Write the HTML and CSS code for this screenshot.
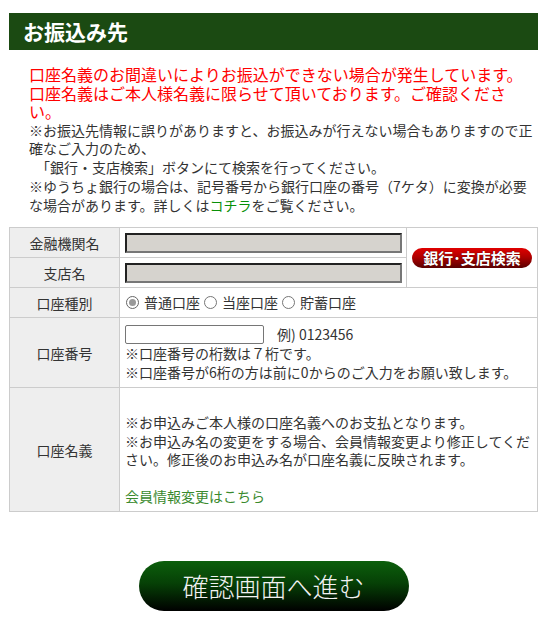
FILE: index.html
```html
<!DOCTYPE html>
<html lang="ja">
<head>
<meta charset="utf-8">
<title>お振込み先</title>
<link rel="stylesheet" href="styles.css">
</head>
<body>
<div class="page">
  <h2 class="head">お振込み先</h2>
  <div class="notes">
    <p class="warn">口座名義のお間違いによりお振込ができない場合が発生しています。口座名義はご本人様名義に限らせて頂いております。ご確認ください。</p>
    <p class="info">※お振込先情報に誤りがありますと、お振込みが行えない場合もありますので正確なご入力のため、<br>　「銀行・支店検索」ボタンにて検索を行ってください。<br>※ゆうちょ銀行の場合は、記号番号から銀行口座の番号（7ケタ）に変換が必要な場合があります。詳しくは<a class="g" href="#">コチラ</a>をご覧ください。</p>
  </div>
  <table class="form">
    <tr class="r1">
      <th>金融機関名</th>
      <td class="val"><span class="ro"></span></td>
      <td class="btncell" rowspan="2"><span class="search">銀行･支店検索</span></td>
    </tr>
    <tr class="r2">
      <th>支店名</th>
      <td class="val"><span class="ro"></span></td>
    </tr>
    <tr class="r3">
      <th>口座種別</th>
      <td class="val" colspan="2"><label class="rad"><span class="radio on"></span>普通口座</label><label class="rad"><span class="radio"></span>当座口座</label><label class="rad"><span class="radio"></span>貯蓄口座</label></td>
    </tr>
    <tr class="r4">
      <th>口座番号</th>
      <td class="val acc" colspan="2"><span class="num"></span><span class="ex">例) 0123456</span><br>※口座番号の桁数は７桁です。<br>※口座番号が6桁の方は前に0からのご入力をお願い致します。</td>
    </tr>
    <tr class="r5">
      <th>口座名義</th>
      <td class="val name" colspan="2">※お申込みご本人様の口座名義へのお支払となります。<br>※お申込み名の変更をする場合、会員情報変更より修正してください。修正後のお申込み名が口座名義に反映されます。<br><br><a class="g2" href="#">会員情報変更はこちら</a></td>
    </tr>
  </table>
  <div class="submitrow"><span class="submit">確認画面へ進む</span></div>
</div>
</body>
</html>
```
FILE: styles.css
```css
html, body { margin: 0; padding: 0; background: #fff; }
body {
  font-family: "Noto Sans CJK JP", "Noto Sans", sans-serif;
  color: #333;
  font-size: 14px;
}
.page { margin: 0 7px 0 9px; padding-top: 13px; }
.head {
  margin: 0;
  height: 37px;
  line-height: 37px;
  background: #1b4a12;
  color: #fff;
  font-size: 21px;
  font-weight: bold;
  padding-left: 14px;
}
.notes { padding: 0 1px 0 20px; margin-top: 15px; }
.notes p { margin: 0; }
.warn { color: #f00; font-size: 16px; line-height: 18.5px; }
.info { font-size: 14px; line-height: 18.75px; }
a.g { color: #089008; text-decoration: none; }
a.g2 { color: #3a8a2e; text-decoration: none; }

.form {
  width: 100%;
  margin-top: 13px;
  border-collapse: collapse;
  border: 1px solid #ccc;
}
.form th, .form td { border: 1px solid #ccc; padding: 0; }
.form th {
  width: 110px;
  background: #eee;
  font-weight: normal;
  text-align: center;
  color: #333;
}
.form td.val { padding: 0 4px 0 5px; text-align: left; line-height: 19px; }
.r1 th, .r2 th, .r3 th { height: 29px; }
.r4 th { height: 69px; }
.r5 th { height: 123px; }
.ro {
  display: block;
  width: 273px;
  height: 16px;
  background: #d6d3ce;
  border: 2px solid;
  border-color: #222 #777 #777 #222;
}
.form td.btncell { width: 130px; text-align: center; vertical-align: middle; }
.search {
  display: inline-block;
  width: 120px;
  height: 20px;
  line-height: 20px;
  border-radius: 10px;
  background: linear-gradient(#e00000 0%, #b00000 45%, #5a0000 100%);
  color: #fff;
  font-weight: bold;
  font-size: 15px;
  text-shadow: 0 0 1px #300;
}
.rad { display: inline-flex; align-items: center; margin-right: 3px; }
.radio {
  display: inline-block;
  box-sizing: border-box;
  width: 13px;
  height: 13px;
  border-radius: 50%;
  border: 1px solid #767676;
  background: #fff;
  margin: 0 5px 0 1px;
  position: relative;
}
.radio.on { border-color: #666; }
.radio.on::after {
  content: "";
  position: absolute;
  left: 2px; top: 2px;
  width: 7px; height: 7px;
  border-radius: 50%;
  background: #999;
}
.form td.acc { padding-top: 5px; padding-bottom: 5px; }
.num {
  display: inline-block;
  vertical-align: middle;
  box-sizing: border-box;
  width: 139px;
  height: 19px;
  border: 1px solid #767676;
  border-radius: 2px;
  background: #fff;
}
.ex { margin-left: 13px; vertical-align: middle; }
.form td.name { line-height: 18.5px; vertical-align: top; padding-top: 25px; }
.submitrow { text-align: center; margin-top: 49px; }
.submit {
  display: inline-block;
  width: 270px;
  height: 50px;
  line-height: 50px;
  border-radius: 25px;
  background: linear-gradient(#0c5f0c 0%, #064006 45%, #000 100%);
  color: #f2f2f2;
  font-size: 26px;
  font-weight: 300;
}
```
